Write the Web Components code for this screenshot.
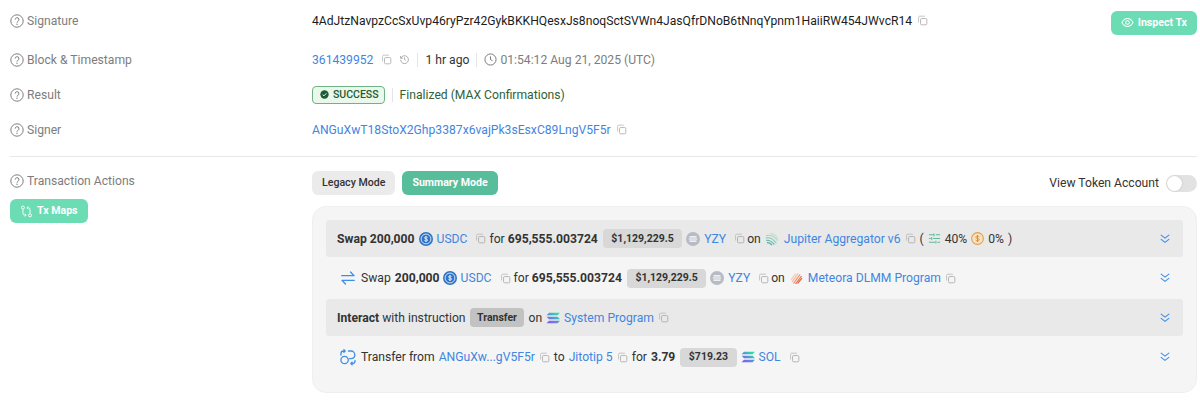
<!DOCTYPE html>
<html>
<head>
<meta charset="utf-8">
<title>Transaction</title>
<style>
  html, body { margin: 0; background: #fff; }
  body { font: 12.15px/18px Roboto, "Liberation Sans", sans-serif; color: #333; }
</style>
</head>
<body>
<tx-page>
  <tx-field label="Signature" first>
    <tx-text dark>4AdJtzNavpzCcSxUvp46ryPzr42GykBKKHQesxJs8noqSctSVWn4JasQfrDNoB6tNnqYpnm1HaiiRW454JWvcR14</tx-text>
    <tx-icon name="copy"></tx-icon>
    <tx-button slot="end" tone="mint" icon="eye">Inspect Tx</tx-button>
  </tx-field>
  <tx-field label="Block &amp; Timestamp">
    <tx-text link>361439952</tx-text>
    <tx-icon name="copy" style="margin-left:3px"></tx-icon>
    <tx-icon name="history" style="margin-left:2px"></tx-icon>
    <tx-sep></tx-sep>
    <span>1 hr ago</span>
    <tx-sep></tx-sep>
    <tx-icon name="clock" size="13"></tx-icon>
    <tx-text muted style="margin-left:-2px">01:54:12 Aug 21, 2025 (UTC)</tx-text>
  </tx-field>
  <tx-field label="Result">
    <tx-status>SUCCESS</tx-status>
    <tx-sep></tx-sep>
    <tx-text final>Finalized (MAX Confirmations)</tx-text>
  </tx-field>
  <tx-field label="Signer">
    <tx-text link>ANGuXwT18StoX2Ghp3387x6vajPk3sEsxC89LngV5F5r</tx-text>
    <tx-icon name="copy"></tx-icon>
  </tx-field>
  <tx-actions>
    <tx-button slot="modes" tone="grey">Legacy Mode</tx-button>
    <tx-button slot="modes" tone="green">Summary Mode</tx-button>
    <tx-panel>
      <tx-row head>
        <b>Swap 200,000</b>
        <tx-icon name="usdc" size="14"></tx-icon>
        <tx-text link>USDC</tx-text>
        <tx-icon name="copy" style="margin:0 -1px 0 4px"></tx-icon>
        <span style="margin-right:-1px">for</span>
        <b>695,555.003724</b>
        <tx-price>$1,129,229.5</tx-price>
        <tx-icon name="yzy" size="14"></tx-icon>
        <tx-text link>YZY</tx-text>
        <tx-icon name="copy" style="margin:0 -2px 0 4px"></tx-icon>
        <span>on</span>
        <tx-icon name="jupiter" size="14"></tx-icon>
        <tx-text link style="margin-left:1px">Jupiter Aggregator v6</tx-text>
        <tx-icon name="copy"></tx-icon>
        <span>(</span>
        <tx-icon name="sliders" size="13"></tx-icon>
        <span>40%</span>
        <tx-icon name="dollar" size="13"></tx-icon>
        <span>0%</span>
        <span>)</span>
      </tx-row>
      <tx-row>
        <tx-icon name="swap" size="16" style="margin-right:1px"></tx-icon>
        <span>Swap</span>
        <b>200,000</b>
        <tx-icon name="usdc" size="14" style="margin-left:-1px"></tx-icon>
        <tx-text link>USDC</tx-text>
        <tx-icon name="copy" style="margin:0 -1px 0 4px"></tx-icon>
        <span style="margin-right:-1px">for</span>
        <b>695,555.003724</b>
        <tx-price>$1,129,229.5</tx-price>
        <tx-icon name="yzy" size="14"></tx-icon>
        <tx-text link>YZY</tx-text>
        <tx-icon name="copy" style="margin:0 -2px 0 4px"></tx-icon>
        <span>on</span>
        <tx-icon name="meteora" size="14"></tx-icon>
        <tx-text link style="margin-left:1px">Meteora DLMM Program</tx-text>
        <tx-icon name="copy"></tx-icon>
      </tx-row>
      <tx-row head>
        <span><b>Interact</b> with instruction</span>
        <tx-price dark>Transfer</tx-price>
        <span>on</span>
        <tx-icon name="solana" size="14"></tx-icon>
        <tx-text link>System Program</tx-text>
        <tx-icon name="copy"></tx-icon>
      </tx-row>
      <tx-row>
        <tx-icon name="transfer" size="16" style="margin-right:1px"></tx-icon>
        <span>Transfer from</span>
        <tx-text link>ANGuXw...gV5F5r</tx-text>
        <tx-icon name="copy"></tx-icon>
        <span>to</span>
        <tx-text link>Jitotip 5</tx-text>
        <tx-icon name="copy"></tx-icon>
        <span>for</span>
        <b>3.79</b>
        <tx-price>$719.23</tx-price>
        <tx-icon name="solana" size="14"></tx-icon>
        <tx-text link>SOL</tx-text>
        <tx-icon name="copy" style="margin-left:4px"></tx-icon>
      </tx-row>
    </tx-panel>
  </tx-actions>
</tx-page>

<script>
const icons = {
  copy: `<rect x="4.500" y="4.500" width="8" height="8" rx="1.500" fill="none" stroke="#a6a6a6"/><path d="M2 9.500V3a1.500 1.500 0 0 1 1.500-1.500H10" fill="none" stroke="#b8b8b8"/>`,
  help: `<circle cx="7" cy="7" r="6.200" fill="none" stroke="#808080"/><path d="M5.200 5.600a1.900 1.900 0 1 1 2.700 1.700c-.6.3-.9.7-.9 1.300" fill="none" stroke="#808080"/><circle cx="7" cy="10.300" r=".7" fill="#808080"/>`,
  history: `<path d="M2.400 5.200A5 5 0 1 1 2 7.500" fill="none" stroke="#9a9a9a"/><path d="M2 2.600v2.800h2.800M7 4.400V7l1.800 1.200" fill="none" stroke="#9a9a9a"/>`,
  clock: `<circle cx="7" cy="7" r="6" fill="none" stroke="#6f6f6f"/><path d="M7 3.600V7l2.200 1.400" fill="none" stroke="#6f6f6f"/>`,
  eye: `<path d="M1 7c1.600-2.900 3.600-4.300 6-4.300S11.400 4.100 13 7c-1.600 2.900-3.600 4.300-6 4.300S2.600 9.900 1 7z" fill="none" stroke="#fff" stroke-width="1.100"/><circle cx="7" cy="7" r="2" fill="none" stroke="#fff" stroke-width="1.100"/>`,
  maps: `<circle cx="3.200" cy="2.800" r="1.600" fill="none" stroke="#fff"/><circle cx="10.800" cy="11.200" r="1.600" fill="none" stroke="#fff"/><path d="M3.200 4.800v4.400c0 1 .7 1.700 1.700 1.700h1.500M5 9.400l1.600 1.500L5 12.400M10.800 9.200V4.800c0-1-.7-1.700-1.700-1.700H7.600M9 4.600 7.400 3.100 9 1.600" fill="none" stroke="#fff"/>`,
  swap: `<path d="M1.500 5h10.800L9.200 1.800M12.500 9H1.700l3.100 3.200" fill="none" stroke="#3f8fe8" stroke-width="1.150" stroke-linecap="round" stroke-linejoin="round"/>`,
  transfer: `<g transform="scale(.875)" fill="none" stroke="#3f8fe8" stroke-width="1.300" stroke-linecap="round" stroke-linejoin="round"><circle cx="4.600" cy="11" r="3.700"/><path d="M8.500 2H11a3.800 3.800 0 0 1 3.800 3.800c0 2.100-1.600 3.800-3.800 3.800H9.600"/><path d="M1 6V4.500A2.500 2.500 0 0 1 3.500 2H5M3.900.8 5.200 2 3.900 3.200"/><path d="M15 11.500v.5a2.500 2.500 0 0 1-2.500 2.500H11M12.100 13.300l-1.300 1.200 1.300 1.200"/></g>`,
  chevrons: `<path d="M2.500 2.500 7 6l4.500-3.500M2.500 7.500 7 11l4.500-3.500" fill="none" stroke="#3f8fe8" stroke-width="1.300" stroke-linecap="round" stroke-linejoin="round"/>`,
  usdc: `<circle cx="7" cy="7" r="7" fill="#2f74c6"/><circle cx="7" cy="7" r="4.900" fill="none" stroke="#e2edf9" stroke-width=".9"/><path d="M8.500 5.700C8.200 5.100 7.700 4.900 7 4.900c-.9 0-1.500.4-1.500 1 0 1.500 3.100.7 3.100 2.200 0 .7-.7 1-1.600 1-.8 0-1.300-.3-1.600-.9M7 4v6" fill="none" stroke="#fff" stroke-width=".8"/>`,
  yzy: `<circle cx="7" cy="7" r="7" fill="#b7bcc4"/><path d="M3.500 4.800h7M2.800 7h8.400M3.500 9.200h7" stroke="#fff" stroke-width="1.200"/>`,
  jupiter: `<g fill="none" stroke-width="1.100"><path d="M1 3.600c4-1 8 .8 11.600 5" stroke="#a8d7c4"/><path d="M.8 6c4-.8 7.600 1 10.600 5.200" stroke="#7fc9b5"/><path d="M1 8.300c3.200-.3 6 1.200 8.400 4.300" stroke="#5bb7a8"/><path d="M2 10.600c2-.1 3.800.8 5 2.500" stroke="#4aa5a0"/><path d="M5 1.400c3 .3 6 2.200 8 5.200" stroke="#c2e2c8"/></g>`,
  meteora: `<g fill="none" stroke-width="1.200"><path d="M3 11 9 2.500" stroke="#f7b493"/><path d="M4.500 12.500 11 3.500" stroke="#f08a62"/><path d="M6.500 13 12.500 5" stroke="#ec7350"/><path d="M2 9 6.500 2.500" stroke="#f9c9a8"/><path d="M8.500 12.500 13 7" stroke="#e9694d"/></g>`,
  solana: `<defs><linearGradient id="s" x1="0" y1="1" x2="1" y2="0"><stop offset="0" stop-color="#9945ff"/><stop offset=".5" stop-color="#5497d5"/><stop offset="1" stop-color="#19fb9b"/></linearGradient></defs><path d="M3 1.800h11l-2.400 2.400H.6zM.6 5.800h11L14 8.200H3zM3 9.800h11l-2.400 2.400H.6z" fill="url(#s)"/>`,
  sliders: `<path d="M1 3h5M8.500 3H13M1 7h2M5.500 7H13M1 11h6.500M10 11h3M6.500 1.500v3M4 5.500v3M8.500 9.500v3" fill="none" stroke="#5dbb9b" stroke-width="1.100"/>`,
  dollar: `<circle cx="7" cy="7" r="6.300" fill="#f9e2c0" stroke="#e2a050" stroke-width="1.200"/><path d="M9 5.300C8.700 4.700 8 4.400 7 4.400c-1 0-1.800.5-1.800 1.300 0 1.800 3.700.8 3.700 2.600 0 .8-.9 1.300-1.900 1.300-.9 0-1.700-.4-2-1M7 3.300v7.400" fill="none" stroke="#d68a35"/>`,
  check: `<circle cx="7" cy="7" r="6.500" fill="#1d5c34"/><path d="M4.200 7.200 6.200 9.100 9.900 5.200" fill="none" stroke="#fff" stroke-width="1.400"/>`
};

class TxIcon extends HTMLElement {
  connectedCallback() {
    const size = this.getAttribute("size") || 11;
    const root = this.shadowRoot || this.attachShadow({ mode: "open" });
    root.innerHTML = `
<style>
  :host { display: inline-flex; flex: none; }
  svg { display: block; overflow: visible; }
</style>
<svg width="${size}" height="${size}" viewBox="0 0 14 14">${icons[this.getAttribute("name")] || ""}</svg>`;
  }
}

class TxPage extends HTMLElement {
  constructor() {
    super();
    this.attachShadow({ mode: "open" }).innerHTML = `
<style>
  :host { display: block; padding: 3px 3px 0 10px; }
</style>
<slot></slot>`;
  }
}

class TxField extends HTMLElement {
  constructor() {
    super();
    this.attachShadow({ mode: "open" }).innerHTML = `
<style>
  :host { display: grid; grid-template-columns: 302px 1fr auto; height: 35px; align-items: center; }
  :host([first]) { margin-bottom: 4px; }
  .value { display: flex; align-items: center; gap: 5px; }
  ::slotted([slot="end"]) { position: relative; top: 2px; }
</style>
<tx-label></tx-label>
<div class="value"><slot></slot></div>
<slot name="end"></slot>`;
  }
  connectedCallback() {
    this.shadowRoot.querySelector("tx-label").textContent = this.getAttribute("label");
  }
}

class TxLabel extends HTMLElement {
  constructor() {
    super();
    this.attachShadow({ mode: "open" }).innerHTML = `
<style>
  :host { display: flex; align-items: center; gap: 3px; color: #7d7d7d; }
</style>
<tx-icon name="help" size="14"></tx-icon><slot></slot>`;
  }
}

class TxText extends HTMLElement {
  constructor() {
    super();
    this.attachShadow({ mode: "open" }).innerHTML = `
<style>
  :host { display: inline; white-space: nowrap; }
  :host([dark]) { color: #1c1c1c; }
  :host([link]) { color: #3f86e0; }
  :host([muted]) { color: #7d7d7d; }
  :host([final]) { color: #2f6138; }
</style>
<slot></slot>`;
  }
}

class TxSep extends HTMLElement {
  constructor() {
    super();
    this.attachShadow({ mode: "open" }).innerHTML = `
<style>
  :host { display: block; width: 1px; height: 14px; background: #e4e4e4; margin: 0 2px; }
</style>`;
  }
}

class TxStatus extends HTMLElement {
  constructor() {
    super();
    this.attachShadow({ mode: "open" }).innerHTML = `
<style>
  :host { display: inline-flex; align-items: center; gap: 4px; height: 18px; padding: 0 5px 0 7px; box-sizing: border-box;
    border: 1px solid #6fb384; border-radius: 4px; background: #e9f8ea; color: #1d5c34; font-size: 10.5px; font-weight: 500; }
</style>
<tx-icon name="check" size="9"></tx-icon><slot></slot>`;
  }
}

class TxButton extends HTMLElement {
  constructor() {
    super();
    this.attachShadow({ mode: "open" }).innerHTML = `
<style>
  :host { display: inline-flex; align-items: center; gap: 4px; height: 24px; padding: 0 10px; border-radius: 6px;
    font-size: 10.6px; font-weight: 700; white-space: nowrap; }
  :host([tone="mint"]) { background: #6cdcb5; color: #fff; }
  :host([tone="green"]) { background: #57bd9a; color: #fff; }
  :host([tone="grey"]) { background: #ebebeb; color: #333; font-weight: 500; }
</style>
<slot name="icon"></slot><slot></slot>`;
  }
  connectedCallback() {
    const icon = this.getAttribute("icon");
    if (icon && !this.querySelector("tx-icon")) {
      const el = document.createElement("tx-icon");
      el.setAttribute("name", icon);
      el.setAttribute("size", "13");
      el.setAttribute("slot", "icon");
      this.prepend(el);
    }
  }
}

class TxToggle extends HTMLElement {
  constructor() {
    super();
    this.attachShadow({ mode: "open" }).innerHTML = `
<style>
  :host { display: inline-flex; align-items: center; gap: 7px; color: #333; }
  .track { width: 31px; height: 17px; border-radius: 9px; background: #e2e2e2; position: relative; }
  .knob { position: absolute; left: 1px; top: 1px; width: 15px; height: 15px; border-radius: 50%; background: #fff; box-shadow: 0 0 2px rgba(0,0,0,.2); }
</style>
<slot></slot><div class="track"><div class="knob"></div></div>`;
  }
}

class TxActions extends HTMLElement {
  constructor() {
    super();
    this.attachShadow({ mode: "open" }).innerHTML = `
<style>
  :host { display: grid; grid-template-columns: 302px 1fr; border-top: 1px solid #e8e8e8; margin-top: 9px; padding-top: 14px; }
  .left { display: flex; flex-direction: column; align-items: flex-start; gap: 9px; padding-top: 1px; }
  .top { display: flex; align-items: center; justify-content: space-between; margin-bottom: 11px; }
  .modes { display: flex; gap: 7px; }
</style>
<div class="left">
  <tx-label>Transaction Actions</tx-label>
  <tx-button tone="mint" icon="maps">Tx Maps</tx-button>
</div>
<div>
  <div class="top">
    <div class="modes"><slot name="modes"></slot></div>
    <tx-toggle>View Token Account</tx-toggle>
  </div>
  <slot></slot>
</div>`;
  }
}

class TxPanel extends HTMLElement {
  constructor() {
    super();
    this.attachShadow({ mode: "open" }).innerHTML = `
<style>
  :host { display: block; background: #f5f5f5; border: 1px solid #efefef; border-radius: 14px; padding: 13px 13px 14px; }
</style>
<slot></slot>`;
  }
}

class TxRow extends HTMLElement {
  constructor() {
    super();
    this.attachShadow({ mode: "open" }).innerHTML = `
<style>
  :host { display: flex; align-items: center; justify-content: space-between; height: 42px; padding: 0 12px 0 14px; box-sizing: border-box; white-space: nowrap; }
  :host([head]) { height: 37px; padding-left: 11px; background: #e9e9e9; border-radius: 3px; }
  .items { display: flex; align-items: center; gap: 4px; }
  ::slotted(b) { font-weight: 700; color: #333; }
</style>
<div class="items"><slot></slot></div>
<tx-icon name="chevrons" size="12"></tx-icon>`;
  }
}

class TxPrice extends HTMLElement {
  constructor() {
    super();
    this.attachShadow({ mode: "open" }).innerHTML = `
<style>
  :host { display: inline-flex; align-items: center; height: 19px; padding: 0 8.5px; margin-left: 1px; border-radius: 4px; background: #d8d8d8;
    font-size: 10.5px; font-weight: 700; color: #333; }
  :host([dark]) { background: #c2c2c2; padding: 0 7.5px; margin-left: 0; }
</style>
<slot></slot>`;
  }
}

customElements.define("tx-icon", TxIcon);
customElements.define("tx-page", TxPage);
customElements.define("tx-field", TxField);
customElements.define("tx-label", TxLabel);
customElements.define("tx-text", TxText);
customElements.define("tx-sep", TxSep);
customElements.define("tx-status", TxStatus);
customElements.define("tx-button", TxButton);
customElements.define("tx-toggle", TxToggle);
customElements.define("tx-actions", TxActions);
customElements.define("tx-panel", TxPanel);
customElements.define("tx-row", TxRow);
customElements.define("tx-price", TxPrice);
</script>
</body>
</html>
